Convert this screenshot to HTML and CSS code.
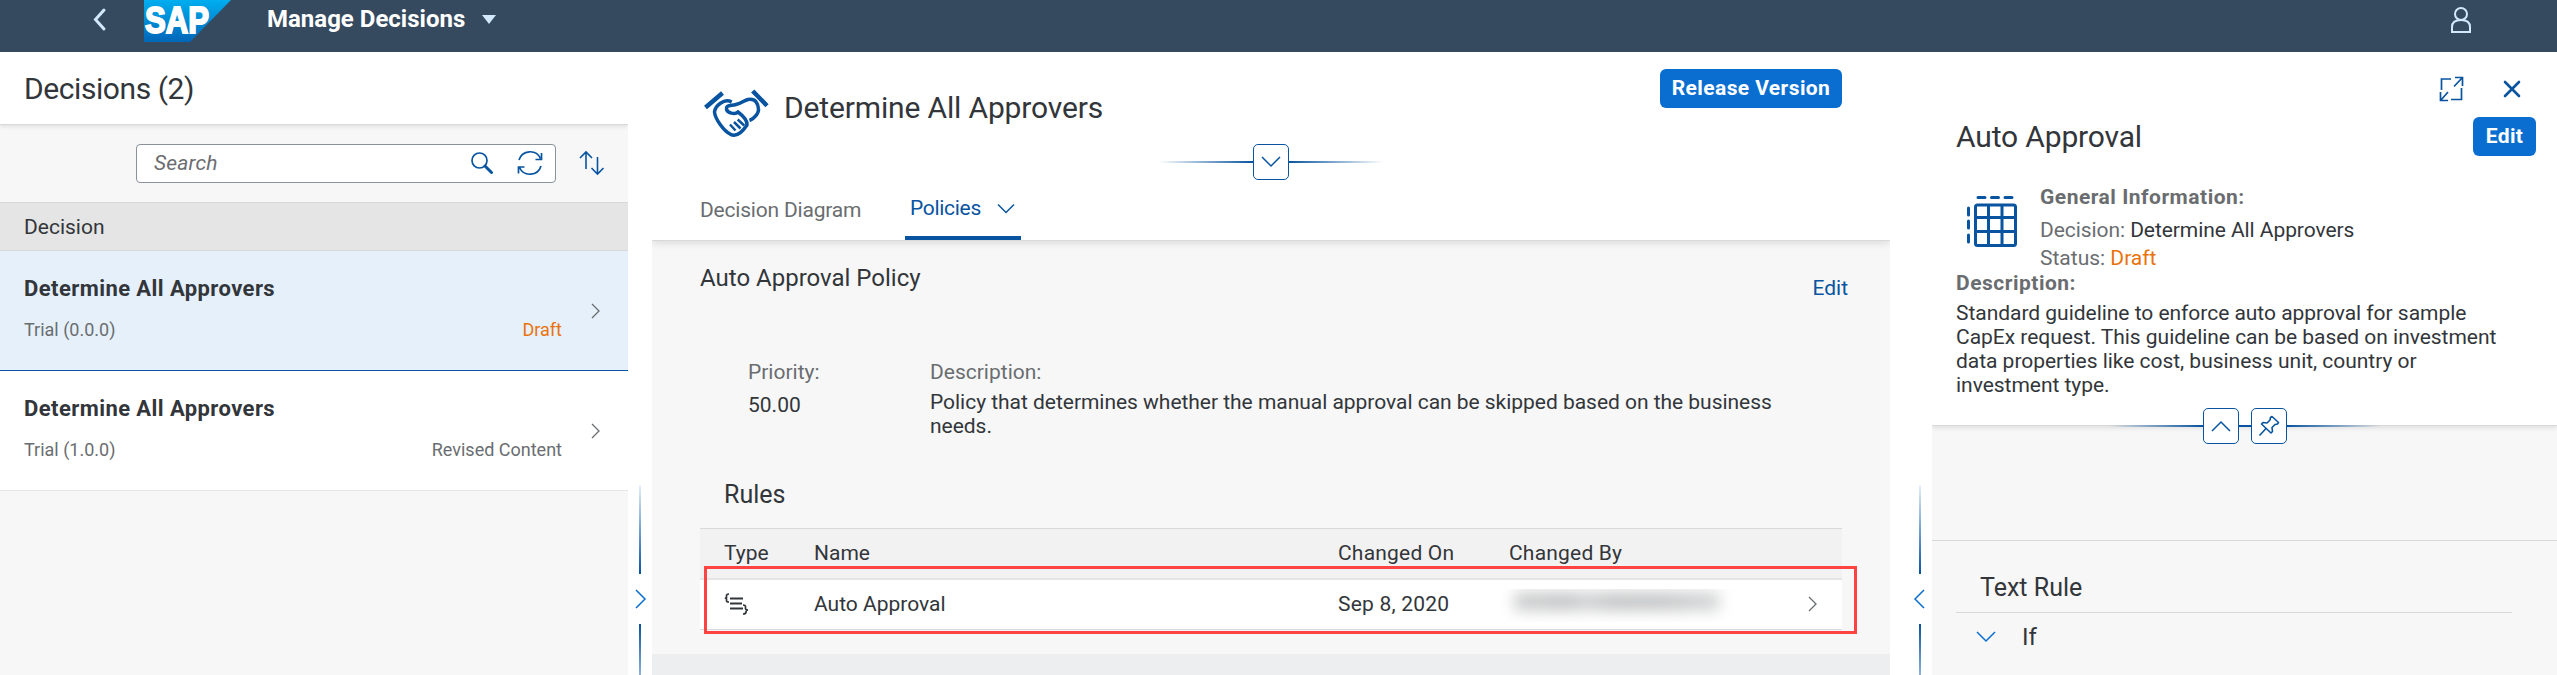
FILE: index.html
```html
<!DOCTYPE html>
<html lang="en">
<head>
<meta charset="utf-8">
<title>Manage Decisions</title>
<link rel="stylesheet" href="styles.css">
</head>
<body>
<header class="shell">
  <svg class="back" width="15" height="23" viewBox="0 0 15 23"><path d="M12 2 3.500 11.500 12 21" fill="none" stroke="#d1e8ff" stroke-width="3" stroke-linecap="round"/></svg>
  <div class="logo">
    <svg width="87" height="42" viewBox="0 0 87 42"><defs><linearGradient id="sap" x1="0" y1="0" x2="0" y2="1"><stop offset="0" stop-color="#00aeef"/><stop offset="1" stop-color="#0066b8"/></linearGradient></defs><path d="M0 0H87L46 42H0Z" fill="url(#sap)"/><text x="1" y="33" textLength="64" lengthAdjust="spacingAndGlyphs" class="logo-text">SAP</text></svg>
  </div>
  <h1 class="shell-title">Manage Decisions</h1>
  <svg class="caret" width="14" height="9" viewBox="0 0 14 9"><path d="M0 0H14L7 9Z" fill="#d1e8ff"/></svg>
  <svg class="user" width="20" height="26" viewBox="0 0 20 26"><g fill="none" stroke="#d1e8ff" stroke-width="2"><ellipse cx="10" cy="7" rx="6" ry="6"/><path d="M1 25v-5q0-7 9-7t9 7v5z"/></g></svg>
</header>
<div class="columns">
  <aside class="master">
    <h2 class="master-title">Decisions (2)</h2>
    <div class="toolbar">
      <div class="search"><span class="placeholder">Search</span>
        <svg width="22" height="22" viewBox="0 0 22 22"><g fill="none" stroke="#0854a0"><circle cx="8.500" cy="8.500" r="7.500" stroke-width="1.700"/><path d="M14 14l6.500 6.500" stroke-width="3" stroke-linecap="round"/></g></svg>
        <svg class="refresh" width="26" height="26" viewBox="0 0 26 26"><g fill="none" stroke="#0854a0" stroke-width="1.700"><path d="M2 10A11.500 11.500 0 0 1 23.500 8.500M24.500 3v6.500h-6M24 16A11.500 11.500 0 0 1 2.500 17.500M1.500 23.500V17h6"/></g></svg>
      </div>
      <svg class="sort" width="26" height="24" viewBox="0 0 26 24"><path d="M7 18V1.500M1 7l6-6 6 6M18.500 6v16.500M12.500 17l6 6 6-6" fill="none" stroke="#0854a0" stroke-width="1.600"/></svg>
    </div>
    <div class="list-head">Decision</div>
    <div class="item selected">
      <div class="item-body"><div class="item-title">Determine All Approvers</div><div class="item-sub"><span>Trial (0.0.0)</span><span class="draft">Draft</span></div></div>
      <svg width="9" height="16" viewBox="0 0 9 16"><path d="M1 1l7 7-7 7" fill="none" stroke="#6a6d70" stroke-width="1.300"/></svg>
    </div>
    <div class="item">
      <div class="item-body"><div class="item-title">Determine All Approvers</div><div class="item-sub"><span>Trial (1.0.0)</span><span>Revised Content</span></div></div>
      <svg width="9" height="16" viewBox="0 0 9 16"><path d="M1 1l7 7-7 7" fill="none" stroke="#6a6d70" stroke-width="1.300"/></svg>
    </div>
  </aside>
  <div class="splitter left">
    <i class="fade-up"></i>
    <svg width="11" height="20" viewBox="0 0 11 20"><path d="M1 1l9 9-9 9" fill="none" stroke="#0a6ed1" stroke-width="1.500"/></svg>
    <i class="fade-down"></i>
  </div>
  <main class="detail">
    <section class="detail-head">
      <div class="title-row">
        <svg class="shake" width="66" height="48" viewBox="0 0 66 48"><g fill="none" stroke="#0854a0"><path d="M1.500 18.500 18.500 4M48.700 2 63 16.700" stroke-width="4.500"/><path d="M27.700 13C20 9 11 17 10.500 23 11 30 20 42 26 45c5 3 11 0 17-9 .5-5-5-10-9-13-3 3-11 1-11.500-3-.5-4 3.500-3 9.500-4.500 6-1.500 8-4 12-5 8-1.500 10 4.500 10.500 9.500.5 4-4.500 10-9 11.500" stroke-width="3.500"/><path d="M26 35.500l5.500 6M30 33l6.500 6.500M33.700 30.500l6.500 6" stroke-width="2.500"/></g></svg>
        <h2 class="page-title">Determine All Approvers</h2>
        <button class="primary release">Release Version</button>
      </div>
      <div class="anchor"><i class="fade-l"></i><span class="box"><svg width="20" height="12" viewBox="0 0 20 12"><path d="M1 1l9 9 9-9" fill="none" stroke="#0854a0" stroke-width="1.500"/></svg></span><i class="fade-r"></i></div>
      <nav class="tabs"><span class="tab">Decision Diagram</span><span class="tab active">Policies<svg width="18" height="10" viewBox="0 0 18 10"><path d="M1 .5l8 8 8-8" fill="none" stroke="#0854a0" stroke-width="1.500"/></svg></span></nav>
    </section>
    <section class="policy">
      <div class="policy-head"><h3 class="policy-title">Auto Approval Policy</h3><a class="link">Edit</a></div>
      <div class="fields">
        <div class="priority"><div class="label">Priority:</div><div class="num">50.00</div></div>
        <div class="descr"><div class="label">Description:</div><div class="text">Policy that determines whether the manual approval can be skipped based on the business<br>needs.</div></div>
      </div>
      <h3 class="rules-title">Rules</h3>
      <div class="table">
        <div class="row head"><span>Type</span><span>Name</span><span>Changed On</span><span>Changed By</span></div>
        <div class="row body">
          <span><svg class="rule-icon" width="25" height="22" viewBox="0 0 25 22"><g fill="none" stroke="#32363a"><path d="M6 5.500h13M6 10.500h12M6 15.500h13" stroke-width="2.200"/><path d="M5 1Q2 1 2.500 3.500T1 5q2 0 1.500 2T5 9M19 12q3 0 2.500 2.500T24 17q-2 0-2 2t-3 2" stroke-width="1.700"/></g></svg></span>
          <span>Auto Approval</span><span>Sep 8, 2020</span><span class="masked"><i></i></span>
          <svg width="9" height="16" viewBox="0 0 9 16"><path d="M1 1l7 7-7 7" fill="none" stroke="#6a6d70" stroke-width="1.300"/></svg>
        </div>
        <div class="highlight"></div>
      </div>
    </section>
  </main>
  <div class="splitter right">
    <i class="fade-up"></i>
    <svg width="11" height="20" viewBox="0 0 11 20"><path d="M10 1l-9 9 9 9" fill="none" stroke="#0a6ed1" stroke-width="1.500"/></svg>
    <i class="fade-down"></i>
  </div>
  <aside class="side">
    <section class="side-head">
      <div class="side-actions">
        <svg width="25" height="26" viewBox="0 0 25 26"><path d="M12 3H2.500v11M16 1.500h7.500V10M23 2l-8 8.500M22.500 12v11.500H12M1.500 16v8.500h7.500M2 24l7-8" fill="none" stroke="#0854a0" stroke-width="1.700"/></svg>
        <svg width="18" height="18" viewBox="0 0 18 18"><path d="M2 2l14 14M16 2 2 16" fill="none" stroke="#0854a0" stroke-width="2.600" stroke-linecap="round"/></svg>
      </div>
      <div class="side-title-row"><h2 class="page-title">Auto Approval</h2><button class="primary edit">Edit</button></div>
      <div class="info">
        <svg width="50" height="51" viewBox="0 0 50 51"><g fill="none" stroke="#0854a0"><rect x="8.500" y="9" width="40" height="40.500" rx="2" stroke-width="3"/><path d="M21.500 9v40M35 9v40M8 21.500h41M8 35.500h41" stroke-width="3"/><path d="M11 1.500h7M24.500 1.500h7M38 1.500h7M1.500 12v7M1.500 25v7M1.500 39v7" stroke-width="3" stroke-linecap="round"/></g></svg>
        <div class="info-text"><b class="gi">General Information:</b><div class="dec"><span class="label">Decision:</span> Determine All Approvers</div><div class="stat"><span class="label">Status:</span> <span class="draft">Draft</span></div></div>
      </div>
      <b class="desc-label">Description:</b>
      <p class="desc">Standard guideline to enforce auto approval for sample<br>CapEx request. This guideline can be based on investment<br>data properties like cost, business unit, country or<br>investment type.</p>
    </section>
    <div class="anchor side-anchor"><i class="fade-l"></i><span class="box"><svg width="20" height="12" viewBox="0 0 20 12"><path d="M1 11l9-9 9 9" fill="none" stroke="#0854a0" stroke-width="1.500"/></svg></span><i class="mid"></i><span class="box"><svg width="22" height="22" viewBox="0 0 22 22"><path d="M14 1.500 20.500 7.500l-1 1.500-2.500.5-3 3 .5 4L13 18 3.500 9 5 7.500 9 8l3-3 .5-2.500ZM8 13.500 1.500 20.500" fill="none" stroke="#0854a0" stroke-width="1.600" stroke-linejoin="round"/></svg></span><i class="fade-r"></i></div>
    <section class="side-body">
      <h3 class="text-rule">Text Rule</h3>
      <div class="if-row"><svg width="20" height="12" viewBox="0 0 20 12"><path d="M1 1l9 9 9-9" fill="none" stroke="#0a6ed1" stroke-width="1.500"/></svg><span>If</span></div>
    </section>
  </aside>
</div>
</body>
</html>
```
FILE: styles.css
```css
* { box-sizing: border-box; }
body { margin: 0; width: 2557px; height: 675px; overflow: hidden; background: #fff; color: #32363a; font: 21px/24px Roboto, "Liberation Sans", sans-serif; }
h1, h2, h3, p { margin: 0; font-weight: 400; }
svg { display: block; flex: none; overflow: visible; }
i { display: block; }

.shell { display: flex; align-items: flex-start; height: 52px; background: #354a5f; }
.back { margin: 8px 0 0 92px; }
.logo { margin-left: 37px; }
.logo-text { font: 700 37px "Liberation Sans", sans-serif; fill: #fff; stroke: #fff; stroke-width: 2px; }
.shell-title { margin: 3px 0 0 36px; width: 205px; white-space: nowrap; color: #fff; font-weight: 700; font-size: 24px; line-height: 32px; }
.caret { margin: 15px 0 0 10px; }
.user { margin: 7px 86px 0 auto; }

.columns { display: grid; grid-template-columns: 628px 24px 1238px 42px 625px; height: 623px; }

.master { background: #f7f7f7; }
.master-title { position: relative; height: 73px; padding: 19px 24px; background: #fff; border-bottom: 1px solid #d9d9d9; box-shadow: 0 1px 5px rgba(0,0,0,.12); clip-path: inset(0 0 -8px 0); font-size: 30px; line-height: 36px; letter-spacing: -.42px; }
.toolbar { display: flex; align-items: center; height: 77px; padding: 0 23px 1px 136px; }
.search { display: flex; align-items: center; width: 420px; height: 39px; padding: 0 12px 0 17px; border: 1px solid #89919a; border-radius: 4px; background: #fff; }
.placeholder { flex: 1; color: #6a6d70; font-style: italic; letter-spacing: .2px; }
.refresh { margin-left: 24px; }
.sort { margin-left: auto; }
.list-head { height: 49px; padding-left: 24px; border: solid #d9d9d9; border-width: 1px 0; background: #e5e5e5; line-height: 48px; }
.item { display: flex; align-items: center; height: 120px; padding: 0 28px 0 24px; border-bottom: 1px solid #e5e5e5; background: #fff; }
.item.selected { background: #e5f0fa; border-color: #0854a0; }
.item-body { width: 538px; margin: -4px 29px 0 0; }
.item-title { font-weight: 700; font-size: 22px; line-height: 28px; letter-spacing: .42px; }
.item-sub { display: flex; justify-content: space-between; margin-top: 15px; color: #6a6d70; font-size: 18px; line-height: 24px; }
.draft { color: #e9730c; }

.splitter { padding-top: 433px; }
.splitter i { width: 2px; height: 89px; }
.fade-up { background: linear-gradient(#e5f0fa, #0854a0); }
.splitter .fade-down { height: 51px; background: linear-gradient(#0854a0, #8eb0d3); }
.splitter svg { margin: 15px 0; }
.splitter.left { padding-left: 11px; }
.splitter.left svg { margin-left: -4px; }
.splitter.right { padding-left: 29px; }
.splitter.right svg { margin-left: -5px; }

.detail { background: #eceef0; }
.detail-head { position: relative; height: 189px; background: #fff; border-bottom: 1px solid #d9d9d9; box-shadow: 0 2px 8px rgba(0,0,0,.12); clip-path: inset(0 0 -12px 0); }
.title-row { display: flex; align-items: flex-start; height: 91px; padding: 17px 48px 0 52px; }
.shake { margin-top: 20px; }
.page-title { font-size: 30px; line-height: 36px; letter-spacing: -.15px; }
.title-row .page-title { margin: 21px 0 0 14px; }
.primary { height: 39px; padding: 0 0 2px; border: 0; border-radius: 6px; background: #0a6ed1; color: #fff; font: 700 21px Roboto, sans-serif; letter-spacing: .4px; }
.release { width: 182px; margin-left: auto; }
.anchor { display: flex; align-items: center; justify-content: center; height: 38px; }
.anchor i { height: 2px; background: #0854a0; }
.anchor .fade-l { width: 94px; background: linear-gradient(90deg, rgba(8,84,160,0), #0854a0); }
.anchor .fade-r { width: 94px; background: linear-gradient(90deg, #0854a0, rgba(8,84,160,0)); }
.box { display: flex; align-items: center; justify-content: center; width: 36px; height: 36px; border: 1px solid #0854a0; border-radius: 5px; background: #fff; }
.tabs { display: flex; height: 59px; padding-left: 48px; color: #6a6d70; line-height: 59px; letter-spacing: -.2px; }
.tab { width: 161px; white-space: nowrap; }
.tab.active { display: flex; align-items: center; width: 116px; margin-left: 44px; padding-left: 5px; border-bottom: 4px solid #0854a0; border-radius: 2px 2px 0 0; color: #0854a0; line-height: 57px; letter-spacing: -.3px; }
.tab.active svg { margin-left: auto; margin-right: 6px; }

.policy { height: 413px; padding: 0 48px; background: #f7f7f7; }
.policy-head { display: flex; justify-content: space-between; height: 119px; margin-right: -6px; padding-top: 21px; }
.policy-title { font-size: 24px; line-height: 32px; }
.link { margin-top: 10px; color: #0854a0; line-height: 32px; }
.fields { display: flex; height: 106px; padding-left: 48px; }
.priority { width: 182px; }
.label { color: #6a6d70; }
.num { margin-top: 9px; }
.text { margin-top: 6px; white-space: nowrap; letter-spacing: -.03px; }
.rules-title { height: 62px; padding: 13px 24px 0; font-size: 25px; line-height: 32px; }
.table { position: relative; border-top: 1px solid #d9d9d9; }
.row { display: grid; grid-template-columns: 90px 524px 171px 299px auto; align-items: center; padding: 0 0 2px 24px; }
.row span + span + span { letter-spacing: .2px; }
.head { height: 51px; background: #f2f2f2; border-bottom: 2px solid #e5e5e5; }
.body { height: 50px; background: #fff; border-bottom: 1px solid #d9d9d9; }
.masked { height: 33px; width: 236px; margin: 4px 0 0 -8px; overflow: hidden; }
.masked i { width: 206px; height: 19px; margin: 3px 0 0 13px; background: linear-gradient(90deg, #d0d1d2, #c6c7c8 25%, #d2d3d4 35%, #c6c7c8 50%, #c8c9ca 75%, #d8d9da); filter: blur(7px); }
.highlight { position: absolute; left: 4px; top: 37px; width: 1153px; height: 68px; border: 3px solid #ff4242; }

.side { background: #f7f7f7; }
.side-head { height: 374px; padding-left: 24px; background: #fff; border-bottom: 1px solid #d9d9d9; box-shadow: 0 2px 5px rgba(0,0,0,.1); clip-path: inset(0 0 -8px 0); }
.side-actions { display: flex; align-items: center; justify-content: flex-end; gap: 39px; height: 65px; padding: 8px 36px 0 0; }
.side-title-row { display: flex; justify-content: space-between; height: 68px; padding-right: 21px; }
.side-title-row .page-title { margin-top: 2px; }
.edit { width: 63px; }
.info { display: flex; height: 86px; padding: 11px 0 0 11px; }
.info-text { margin-left: 23px; }
.gi { display: block; margin-top: -11px; color: #6a6d70; letter-spacing: .5px; }
.dec { margin-top: 9px; letter-spacing: -.07px; }
.stat { margin-top: 4px; }
.desc-label { display: block; color: #6a6d70; letter-spacing: .5px; }
.desc { margin-top: 6px; white-space: nowrap; letter-spacing: -.03px; }
.side-anchor { position: relative; margin-top: -19px; }
.side-anchor .mid { width: 12px; }
.side-body { margin-top: 95px; padding: 0 45px 0 24px; border-top: 1px solid #d9d9d9; }
.text-rule { height: 72px; padding: 31px 24px 0; border-bottom: 1px solid #d9d9d9; font-size: 25px; line-height: 32px; }
.if-row { display: flex; align-items: center; padding: 8px 0 0 20px; font-size: 24px; line-height: 32px; }
.if-row span { margin-left: 26px; }
```
